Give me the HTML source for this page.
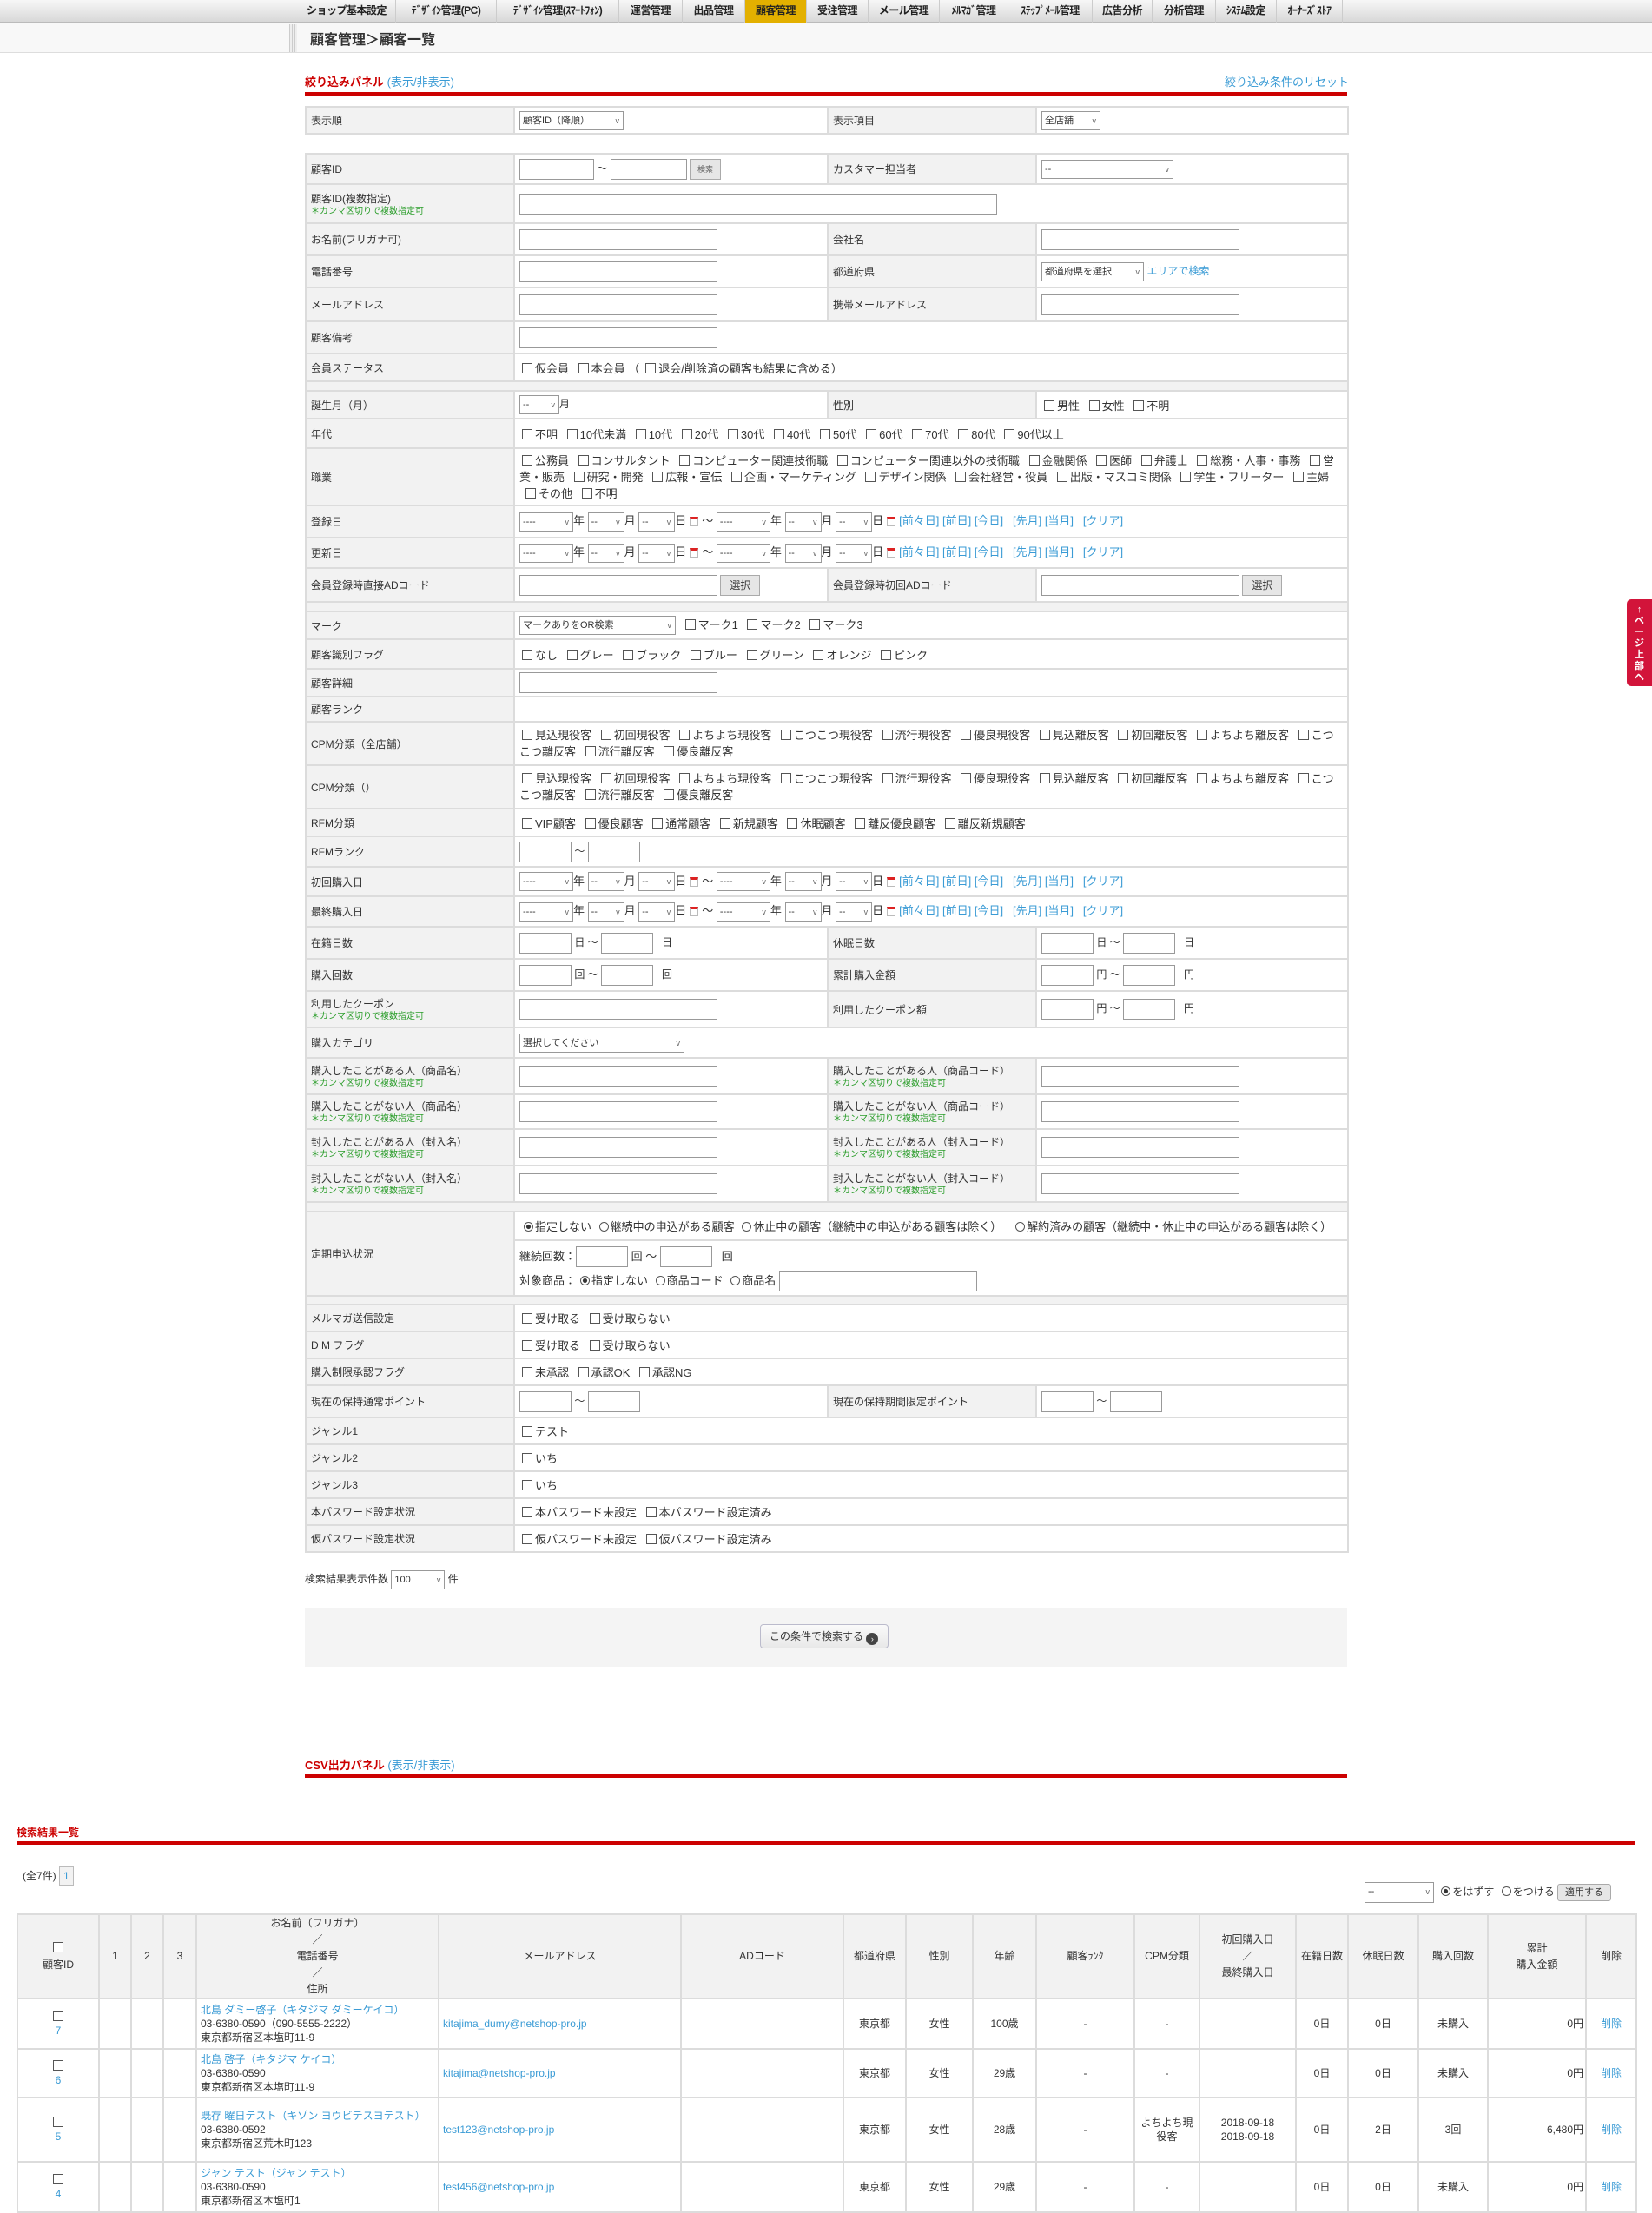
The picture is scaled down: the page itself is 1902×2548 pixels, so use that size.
<!DOCTYPE html>
<html><head><meta charset="utf-8">
<style>
*{box-sizing:border-box;margin:0;padding:0}
body{width:1902px;height:2526px;overflow:hidden;background:#fff;font-family:"Liberation Sans","Noto Sans CJK JP",sans-serif;font-size:12px;color:#333;position:relative}
a{color:#3a9bd5;text-decoration:none}
#nav{position:absolute;left:0;top:0;width:1902px;height:26px;background:linear-gradient(#f7f7f7,#d8d8d8);border-bottom:1px solid #bbb}
#nav span{position:absolute;top:0;height:26px;line-height:25px;text-align:center;font-size:12px;color:#222;border-right:1px solid #ccc;font-weight:bold;letter-spacing:-0.5px}
#nav span.on{background:#e3b000}
#bc{position:absolute;left:0;top:26px;width:1902px;height:35px;background:#f8f8f8;border-bottom:1px solid #ddd}
#bc .st{position:absolute;left:333px;top:2px;width:9px;height:32px;background:repeating-linear-gradient(90deg,#ccc 0 1px,#eee 1px 3px)}
#bc .t{position:absolute;left:357px;top:6px;font-size:16px;font-weight:bold;color:#333}
.ttl{position:absolute;font-size:13px;font-weight:bold;color:#cc0000}
.rl{position:absolute;height:4px;background:#cc0000}
table.f{position:absolute;left:351px;width:1200px;border-collapse:collapse;table-layout:fixed}
table.f td{border:2px solid #dcdcdc;padding:0 5px;vertical-align:middle;font-size:12px}
table.f td.v{font-size:13px}
table.f td.l{background:#f2f2f2}
table.f tr.g td{background:#f2f2f2}
.n{color:#2a9d2a;font-size:10px;display:block;line-height:13px}
.i{display:inline-block;border:1px solid #999;height:24px;vertical-align:middle;background:#fff}
.s{display:inline-block;border:1px solid #999;height:22px;vertical-align:middle;background:#fff;font-size:11px;line-height:20px;padding-left:3px;position:relative}
.s:after{content:"v";position:absolute;right:4px;top:0;font-size:9px;color:#666}
.c{display:inline-block;width:12px;height:12px;border:1px solid #555;vertical-align:-1px;margin:0 3px 0 7px;background:#fff}
td .c:first-child{margin-left:3px}
.r{display:inline-block;width:11px;height:11px;border:1px solid #555;border-radius:50%;vertical-align:-1px;margin:0 2px 0 5px;background:#fff}
.r.on{background:radial-gradient(#333 35%,#fff 45%)}
.b{display:inline-block;border:1px solid #aaa;background:#e6e6e6;height:24px;line-height:22px;padding:0 10px;vertical-align:middle;font-size:12px}
.cal{display:inline-block;width:10px;height:11px;border:1px solid #bbb;border-top:3px solid #d22;vertical-align:middle;margin:0 4px}
table.res{position:absolute;left:19px;top:2203px;width:1864px;border-collapse:collapse;table-layout:fixed}
table.res td{border:2px solid #dcdcdc;text-align:center;font-size:12px;vertical-align:middle;padding:0 2px;line-height:16px}
table.res tr.h td{background:#f2f2f2;line-height:19px}
table.res td.nm{text-align:left;padding-left:4px}
table.res td.em{text-align:left;padding-left:4px}
</style></head><body>
<div id="nav">
<span style="left:343px;width:113px">ショップ基本設定</span>
<span style="left:456px;width:116px">ﾃﾞｻﾞｲﾝ管理(PC)</span>
<span style="left:572px;width:141px">ﾃﾞｻﾞｲﾝ管理(ｽﾏｰﾄﾌｫﾝ)</span>
<span style="left:713px;width:73px">運営管理</span>
<span style="left:786px;width:72px">出品管理</span>
<span class="on" style="left:858px;width:71px">顧客管理</span>
<span style="left:929px;width:71px">受注管理</span>
<span style="left:1000px;width:82px">メール管理</span>
<span style="left:1082px;width:79px">ﾒﾙﾏｶﾞ管理</span>
<span style="left:1161px;width:97px">ｽﾃｯﾌﾟﾒｰﾙ管理</span>
<span style="left:1258px;width:69px">広告分析</span>
<span style="left:1327px;width:73px">分析管理</span>
<span style="left:1400px;width:70px">ｼｽﾃﾑ設定</span>
<span style="left:1470px;width:76px">ｵｰﾅｰｽﾞｽﾄｱ</span>
</div>
<div id="bc"><div class="st"></div><div class="t">顧客管理＞顧客一覧</div></div>

<div class="ttl" style="left:351px;top:84px">絞り込みパネル <a style="font-weight:normal">(表示/非表示)</a></div>
<a style="position:absolute;left:1410px;top:84px;font-size:13px">絞り込み条件のリセット</a>
<div class="rl" style="left:351px;top:106px;width:1200px"></div>

<table class="f" style="top:122px">
<colgroup><col style="width:240px"><col style="width:361px"><col style="width:240px"><col style="width:359px"></colgroup>
<tr style="height:31px"><td class="l">表示順</td><td><span class="s" style="width:120px">顧客ID（降順）</span></td><td class="l">表示項目</td><td><span class="s" style="width:68px">全店舗</span></td></tr>
</table>

<table class="f" style="top:176px">
<colgroup><col style="width:240px"><col style="width:361px"><col style="width:240px"><col style="width:359px"></colgroup>
<tr style="height:35px"><td class="l">顧客ID</td><td><span class="i" style="width:86px"></span> ～ <span class="i" style="width:88px"></span> <span class="b" style="font-size:9px;padding:0 8px;color:#666">検索</span></td><td class="l">カスタマー担当者</td><td><span class="s" style="width:152px">--</span></td></tr>
<tr style="height:45px"><td class="l">顧客ID(複数指定)<span class="n">＊カンマ区切りで複数指定可</span></td><td colspan="3"><span class="i" style="width:550px"></span></td></tr>
<tr style="height:37px"><td class="l">お名前(フリガナ可)</td><td><span class="i" style="width:228px"></span></td><td class="l">会社名</td><td><span class="i" style="width:228px"></span></td></tr>
<tr style="height:37px"><td class="l">電話番号</td><td><span class="i" style="width:228px"></span></td><td class="l">都道府県</td><td><span class="s" style="width:118px">都道府県を選択</span> <a>エリアで検索</a></td></tr>
<tr style="height:39px"><td class="l">メールアドレス</td><td><span class="i" style="width:228px"></span></td><td class="l">携帯メールアドレス</td><td><span class="i" style="width:228px"></span></td></tr>
<tr style="height:37px"><td class="l">顧客備考</td><td colspan="3"><span class="i" style="width:228px"></span></td></tr>
<tr style="height:32px"><td class="l">会員ステータス</td><td colspan="3" class="v"><span class="c"></span>仮会員 <span class="c"></span>本会員 （<span class="c"></span>退会/削除済の顧客も結果に含める）</td></tr>
<tr class="g" style="height:11px"><td colspan="4"></td></tr>
<tr style="height:32px"><td class="l">誕生月（月）</td><td><span class="s" style="width:46px">--</span>月</td><td class="l">性別</td><td class="v"><span class="c"></span>男性 <span class="c"></span>女性 <span class="c"></span>不明</td></tr>
<tr style="height:34px"><td class="l">年代</td><td colspan="3" class="v"><span class="c"></span>不明 <span class="c"></span>10代未満 <span class="c"></span>10代 <span class="c"></span>20代 <span class="c"></span>30代 <span class="c"></span>40代 <span class="c"></span>50代 <span class="c"></span>60代 <span class="c"></span>70代 <span class="c"></span>80代 <span class="c"></span>90代以上</td></tr>
<tr style="height:66px"><td class="l">職業</td><td colspan="3" class="v" style="line-height:19px"><span class="c"></span>公務員 <span class="c"></span>コンサルタント <span class="c"></span>コンピューター関連技術職 <span class="c"></span>コンピューター関連以外の技術職 <span class="c"></span>金融関係 <span class="c"></span>医師 <span class="c"></span>弁護士 <span class="c"></span>総務・人事・事務 <span class="c"></span>営業・販売 <span class="c"></span>研究・開発 <span class="c"></span>広報・宣伝 <span class="c"></span>企画・マーケティング <span class="c"></span>デザイン関係 <span class="c"></span>会社経営・役員 <span class="c"></span>出版・マスコミ関係 <span class="c"></span>学生・フリーター <span class="c"></span>主婦 <span class="c"></span>その他 <span class="c"></span>不明</td></tr>
<tr style="height:37px"><td class="l">登録日</td><td colspan="3" class="v"><span class="s" style="width:62px">----</span>年 <span class="s" style="width:42px">--</span>月 <span class="s" style="width:42px">--</span>日<span class="cal"></span>～ <span class="s" style="width:62px">----</span>年 <span class="s" style="width:42px">--</span>月 <span class="s" style="width:42px">--</span>日<span class="cal"></span><a>[前々日]</a> <a>[前日]</a> <a>[今日]</a> &nbsp; <a>[先月]</a> <a>[当月]</a> &nbsp; <a>[クリア]</a></td></tr>
<tr style="height:35px"><td class="l">更新日</td><td colspan="3" class="v"><span class="s" style="width:62px">----</span>年 <span class="s" style="width:42px">--</span>月 <span class="s" style="width:42px">--</span>日<span class="cal"></span>～ <span class="s" style="width:62px">----</span>年 <span class="s" style="width:42px">--</span>月 <span class="s" style="width:42px">--</span>日<span class="cal"></span><a>[前々日]</a> <a>[前日]</a> <a>[今日]</a> &nbsp; <a>[先月]</a> <a>[当月]</a> &nbsp; <a>[クリア]</a></td></tr>
<tr style="height:39px"><td class="l">会員登録時直接ADコード</td><td><span class="i" style="width:228px"></span> <span class="b">選択</span></td><td class="l">会員登録時初回ADコード</td><td><span class="i" style="width:228px"></span> <span class="b">選択</span></td></tr>
<tr class="g" style="height:11px"><td colspan="4"></td></tr>
<tr style="height:32px"><td class="l">マーク</td><td colspan="3" class="v"><span class="s" style="width:180px">マークありをOR検索</span> <span class="c"></span>マーク1 <span class="c"></span>マーク2 <span class="c"></span>マーク3</td></tr>
<tr style="height:34px"><td class="l">顧客識別フラグ</td><td colspan="3" class="v"><span class="c"></span>なし <span class="c"></span>グレー <span class="c"></span>ブラック <span class="c"></span>ブルー <span class="c"></span>グリーン <span class="c"></span>オレンジ <span class="c"></span>ピンク</td></tr>
<tr style="height:32px"><td class="l">顧客詳細</td><td colspan="3"><span class="i" style="width:228px"></span></td></tr>
<tr style="height:29px"><td class="l">顧客ランク</td><td colspan="3"></td></tr>
<tr style="height:50px"><td class="l">CPM分類（全店舗）</td><td colspan="3" class="v" style="line-height:19px"><span class="c"></span>見込現役客 <span class="c"></span>初回現役客 <span class="c"></span>よちよち現役客 <span class="c"></span>こつこつ現役客 <span class="c"></span>流行現役客 <span class="c"></span>優良現役客 <span class="c"></span>見込離反客 <span class="c"></span>初回離反客 <span class="c"></span>よちよち離反客 <span class="c"></span>こつこつ離反客 <span class="c"></span>流行離反客 <span class="c"></span>優良離反客</td></tr>
<tr style="height:50px"><td class="l">CPM分類（）</td><td colspan="3" class="v" style="line-height:19px"><span class="c"></span>見込現役客 <span class="c"></span>初回現役客 <span class="c"></span>よちよち現役客 <span class="c"></span>こつこつ現役客 <span class="c"></span>流行現役客 <span class="c"></span>優良現役客 <span class="c"></span>見込離反客 <span class="c"></span>初回離反客 <span class="c"></span>よちよち離反客 <span class="c"></span>こつこつ離反客 <span class="c"></span>流行離反客 <span class="c"></span>優良離反客</td></tr>
<tr style="height:32px"><td class="l">RFM分類</td><td colspan="3" class="v"><span class="c"></span>VIP顧客 <span class="c"></span>優良顧客 <span class="c"></span>通常顧客 <span class="c"></span>新規顧客 <span class="c"></span>休眠顧客 <span class="c"></span>離反優良顧客 <span class="c"></span>離反新規顧客</td></tr>
<tr style="height:35px"><td class="l">RFMランク</td><td colspan="3"><span class="i" style="width:60px"></span> ～ <span class="i" style="width:60px"></span></td></tr>
<tr style="height:34px"><td class="l">初回購入日</td><td colspan="3" class="v"><span class="s" style="width:62px">----</span>年 <span class="s" style="width:42px">--</span>月 <span class="s" style="width:42px">--</span>日<span class="cal"></span>～ <span class="s" style="width:62px">----</span>年 <span class="s" style="width:42px">--</span>月 <span class="s" style="width:42px">--</span>日<span class="cal"></span><a>[前々日]</a> <a>[前日]</a> <a>[今日]</a> &nbsp; <a>[先月]</a> <a>[当月]</a> &nbsp; <a>[クリア]</a></td></tr>
<tr style="height:35px"><td class="l">最終購入日</td><td colspan="3" class="v"><span class="s" style="width:62px">----</span>年 <span class="s" style="width:42px">--</span>月 <span class="s" style="width:42px">--</span>日<span class="cal"></span>～ <span class="s" style="width:62px">----</span>年 <span class="s" style="width:42px">--</span>月 <span class="s" style="width:42px">--</span>日<span class="cal"></span><a>[前々日]</a> <a>[前日]</a> <a>[今日]</a> &nbsp; <a>[先月]</a> <a>[当月]</a> &nbsp; <a>[クリア]</a></td></tr>
<tr style="height:37px"><td class="l">在籍日数</td><td><span class="i" style="width:60px"></span> 日 ～ <span class="i" style="width:60px"></span> &nbsp; 日</td><td class="l">休眠日数</td><td><span class="i" style="width:60px"></span> 日 ～ <span class="i" style="width:60px"></span> &nbsp; 日</td></tr>
<tr style="height:37px"><td class="l">購入回数</td><td><span class="i" style="width:60px"></span> 回 ～ <span class="i" style="width:60px"></span> &nbsp; 回</td><td class="l">累計購入金額</td><td><span class="i" style="width:60px"></span> 円 ～ <span class="i" style="width:60px"></span> &nbsp; 円</td></tr>
<tr style="height:42px"><td class="l">利用したクーポン<span class="n">＊カンマ区切りで複数指定可</span></td><td><span class="i" style="width:228px"></span></td><td class="l">利用したクーポン額</td><td><span class="i" style="width:60px"></span> 円 ～ <span class="i" style="width:60px"></span> &nbsp; 円</td></tr>
<tr style="height:35px"><td class="l">購入カテゴリ</td><td colspan="3"><span class="s" style="width:190px">選択してください</span></td></tr>
<tr style="height:42px"><td class="l">購入したことがある人（商品名）<span class="n">＊カンマ区切りで複数指定可</span></td><td><span class="i" style="width:228px"></span></td><td class="l">購入したことがある人（商品コード）<span class="n">＊カンマ区切りで複数指定可</span></td><td><span class="i" style="width:228px"></span></td></tr>
<tr style="height:40px"><td class="l">購入したことがない人（商品名）<span class="n">＊カンマ区切りで複数指定可</span></td><td><span class="i" style="width:228px"></span></td><td class="l">購入したことがない人（商品コード）<span class="n">＊カンマ区切りで複数指定可</span></td><td><span class="i" style="width:228px"></span></td></tr>
<tr style="height:42px"><td class="l">封入したことがある人（封入名）<span class="n">＊カンマ区切りで複数指定可</span></td><td><span class="i" style="width:228px"></span></td><td class="l">封入したことがある人（封入コード）<span class="n">＊カンマ区切りで複数指定可</span></td><td><span class="i" style="width:228px"></span></td></tr>
<tr style="height:42px"><td class="l">封入したことがない人（封入名）<span class="n">＊カンマ区切りで複数指定可</span></td><td><span class="i" style="width:228px"></span></td><td class="l">封入したことがない人（封入コード）<span class="n">＊カンマ区切りで複数指定可</span></td><td><span class="i" style="width:228px"></span></td></tr>
<tr class="g" style="height:11px"><td colspan="4"></td></tr>
<tr style="height:97px"><td class="l">定期申込状況</td><td colspan="3" class="v" style="padding:0">
<div style="height:30px;line-height:28px;border-bottom:2px solid #dcdcdc;padding-left:5px"><span class="r on"></span>指定しない <span class="r"></span>継続中の申込がある顧客 <span class="r"></span>休止中の顧客（継続中の申込がある顧客は除く） &nbsp; <span class="r"></span>解約済みの顧客（継続中・休止中の申込がある顧客は除く）</div>
<div style="padding:4px 5px 0;line-height:28px">継続回数：<span class="i" style="width:60px"></span> 回 ～ <span class="i" style="width:60px"></span> &nbsp; 回<br>対象商品：<span class="r on"></span>指定しない <span class="r"></span>商品コード <span class="r"></span>商品名 <span class="i" style="width:228px"></span></div></td></tr>
<tr class="g" style="height:10px"><td colspan="4"></td></tr>
<tr style="height:31px"><td class="l">メルマガ送信設定</td><td colspan="3" class="v"><span class="c"></span>受け取る <span class="c"></span>受け取らない</td></tr>
<tr style="height:31px"><td class="l">D M フラグ</td><td colspan="3" class="v"><span class="c"></span>受け取る <span class="c"></span>受け取らない</td></tr>
<tr style="height:31px"><td class="l">購入制限承認フラグ</td><td colspan="3" class="v"><span class="c"></span>未承認 <span class="c"></span>承認OK <span class="c"></span>承認NG</td></tr>
<tr style="height:37px"><td class="l">現在の保持通常ポイント</td><td><span class="i" style="width:60px"></span> ～ <span class="i" style="width:60px"></span></td><td class="l">現在の保持期間限定ポイント</td><td><span class="i" style="width:60px"></span> ～ <span class="i" style="width:60px"></span></td></tr>
<tr style="height:31px"><td class="l">ジャンル1</td><td colspan="3" class="v"><span class="c"></span>テスト</td></tr>
<tr style="height:31px"><td class="l">ジャンル2</td><td colspan="3" class="v"><span class="c"></span>いち</td></tr>
<tr style="height:31px"><td class="l">ジャンル3</td><td colspan="3" class="v"><span class="c"></span>いち</td></tr>
<tr style="height:31px"><td class="l">本パスワード設定状況</td><td colspan="3" class="v"><span class="c"></span>本パスワード未設定 <span class="c"></span>本パスワード設定済み</td></tr>
<tr style="height:31px"><td class="l">仮パスワード設定状況</td><td colspan="3" class="v"><span class="c"></span>仮パスワード未設定 <span class="c"></span>仮パスワード設定済み</td></tr>
</table>

<div style="position:absolute;left:351px;top:1808px">検索結果表示件数 <span class="s" style="width:62px">100</span> 件</div>
<div style="position:absolute;left:351px;top:1851px;width:1200px;height:68px;background:#f4f4f4">
<div style="position:absolute;left:524px;top:19px;width:148px;height:28px;border:1px solid #bbc;border-radius:4px;background:linear-gradient(#fafafa,#e8e8e8);font-size:12px;line-height:26px;padding-left:10px">この条件で検索する <span style="display:inline-block;width:14px;height:14px;border-radius:50%;background:#444;color:#fff;font-size:9px;line-height:14px;text-align:center;vertical-align:-2px">›</span></div></div>

<div class="ttl" style="left:351px;top:2022px">CSV出力パネル <a style="font-weight:normal">(表示/非表示)</a></div>
<div class="rl" style="left:351px;top:2043px;width:1200px"></div>

<div class="ttl" style="left:19px;top:2101px;font-size:12px">検索結果一覧</div>
<div class="rl" style="left:19px;top:2120px;width:1864px"></div>
<div style="position:absolute;left:26px;top:2149px">(全7件) <span style="display:inline-block;border:1px solid #bbb;background:#f2f2f2;padding:3px 4px;color:#3a9bd5">1</span></div>
<div style="position:absolute;left:1571px;top:2167px"><span class="s" style="width:80px;height:24px">--</span> <span class="r on"></span>をはずす <span class="r"></span>をつける <span class="b" style="height:20px;line-height:18px;font-size:11px;padding:0 8px;border-radius:3px">適用する</span></div>

<table class="res">
<colgroup><col style="width:94px"><col style="width:37px"><col style="width:37px"><col style="width:38px"><col style="width:279px"><col style="width:279px"><col style="width:187px"><col style="width:72px"><col style="width:77px"><col style="width:73px"><col style="width:113px"><col style="width:75px"><col style="width:111px"><col style="width:60px"><col style="width:81px"><col style="width:80px"><col style="width:113px"><col style="width:58px"></colgroup>
<tr class="h" style="height:86px"><td><span class="c"></span><br>顧客ID</td><td>1</td><td>2</td><td>3</td><td>お名前（フリガナ）<br>／<br>電話番号<br>／<br>住所</td><td>メールアドレス</td><td>ADコード</td><td>都道府県</td><td>性別</td><td>年齢</td><td>顧客ﾗﾝｸ</td><td>CPM分類</td><td>初回購入日<br>／<br>最終購入日</td><td>在籍日数</td><td>休眠日数</td><td>購入回数</td><td>累計<br>購入金額</td><td>削除</td></tr>
<tr style="height:58px"><td><span class="c"></span><br><a>7</a></td><td></td><td></td><td></td><td class="nm"><a>北島 ダミー啓子（キタジマ ダミーケイコ）</a><br>03-6380-0590（090-5555-2222）<br>東京都新宿区本塩町11-9</td><td class="em"><a>kitajima_dumy@netshop-pro.jp</a></td><td></td><td>東京都</td><td>女性</td><td>100歳</td><td>-</td><td>-</td><td></td><td>0日</td><td>0日</td><td>未購入</td><td style="text-align:right">0円</td><td><a>削除</a></td></tr>
<tr style="height:56px"><td><span class="c"></span><br><a>6</a></td><td></td><td></td><td></td><td class="nm"><a>北島 啓子（キタジマ ケイコ）</a><br>03-6380-0590<br>東京都新宿区本塩町11-9</td><td class="em"><a>kitajima@netshop-pro.jp</a></td><td></td><td>東京都</td><td>女性</td><td>29歳</td><td>-</td><td>-</td><td></td><td>0日</td><td>0日</td><td>未購入</td><td style="text-align:right">0円</td><td><a>削除</a></td></tr>
<tr style="height:74px"><td><span class="c"></span><br><a>5</a></td><td></td><td></td><td></td><td class="nm"><a>既存 曜日テスト（キゾン ヨウビテスヨテスト）</a><br>03-6380-0592<br>東京都新宿区荒木町123</td><td class="em"><a>test123@netshop-pro.jp</a></td><td></td><td>東京都</td><td>女性</td><td>28歳</td><td>-</td><td>よちよち現役客</td><td>2018-09-18<br>2018-09-18</td><td>0日</td><td>2日</td><td>3回</td><td style="text-align:right">6,480円</td><td><a>削除</a></td></tr>
<tr style="height:58px"><td><span class="c"></span><br><a>4</a></td><td></td><td></td><td></td><td class="nm"><a>ジャン テスト（ジャン テスト）</a><br>03-6380-0590<br>東京都新宿区本塩町1</td><td class="em"><a>test456@netshop-pro.jp</a></td><td></td><td>東京都</td><td>女性</td><td>29歳</td><td>-</td><td>-</td><td></td><td>0日</td><td>0日</td><td>未購入</td><td style="text-align:right">0円</td><td><a>削除</a></td></tr>
</table>

<div style="position:absolute;left:1873px;top:690px;width:29px;height:100px;background:#d2143a;border-radius:5px 0 0 5px;color:#fff;font-size:11px;font-weight:bold;text-align:center;line-height:13px;padding-top:6px">↑<br>ペ<br>ー<br>ジ<br>上<br>部<br>へ</div>
</body></html>
